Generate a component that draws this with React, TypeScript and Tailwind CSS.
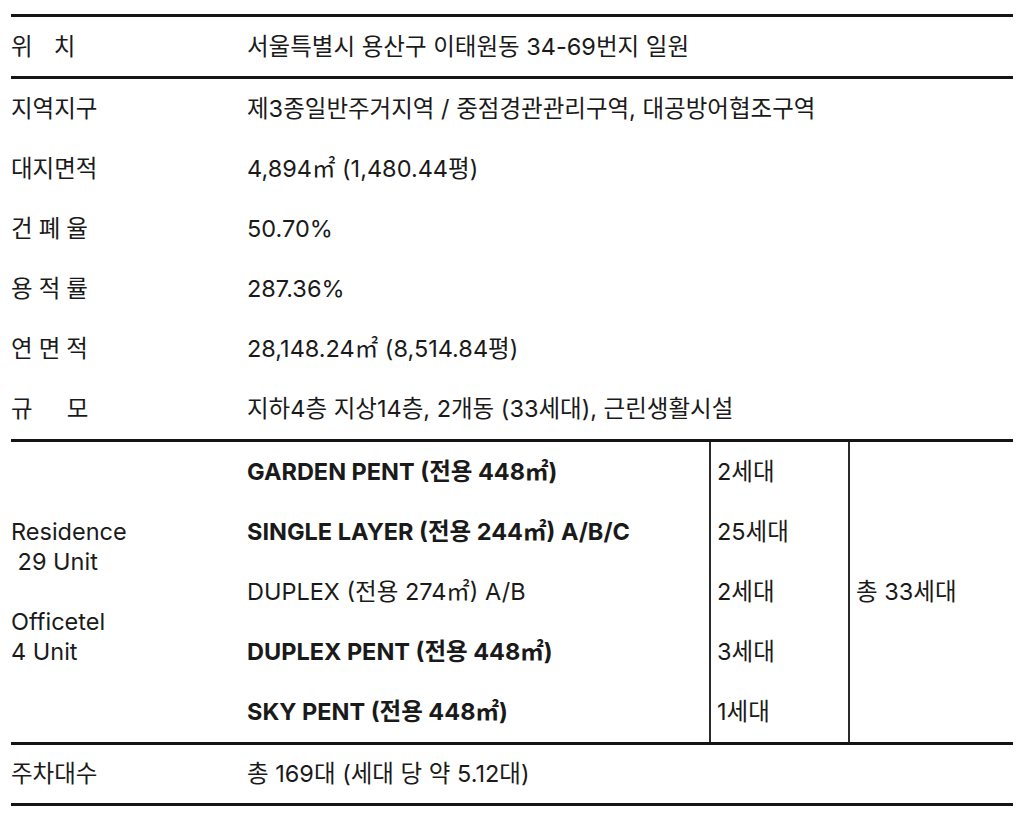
const rows: { label: string[]; gap: string; value: string }[] = [
  { label: ["지역지구"], gap: "gap-0", value: "제3종일반주거지역 / 중점경관관리구역, 대공방어협조구역" },
  { label: ["대지면적"], gap: "gap-0", value: "4,894㎡ (1,480.44평)" },
  { label: ["건", "폐", "율"], gap: "gap-[6px]", value: "50.70%" },
  { label: ["용", "적", "률"], gap: "gap-[6px]", value: "287.36%" },
  { label: ["연", "면", "적"], gap: "gap-[6px]", value: "28,148.24㎡ (8,514.84평)" },
  { label: ["규", "모"], gap: "gap-[34px]", value: "지하4층 지상14층, 2개동 (33세대), 근린생활시설" },
];

const units: { name: string; bold: boolean; count: string }[] = [
  { name: "GARDEN PENT (전용 448㎡)", bold: true, count: "2세대" },
  { name: "SINGLE LAYER (전용 244㎡) A/B/C", bold: true, count: "25세대" },
  { name: "DUPLEX (전용 274㎡) A/B", bold: false, count: "2세대" },
  { name: "DUPLEX PENT (전용 448㎡)", bold: true, count: "3세대" },
  { name: "SKY PENT (전용 448㎡)", bold: true, count: "1세대" },
];

function Label({ parts, gap }: { parts: string[]; gap: string }) {
  return (
    <div className={`flex w-[236px] shrink-0 ${gap}`}>
      {parts.map((p, i) => (
        <span key={i}>{p}</span>
      ))}
    </div>
  );
}

export default function App() {
  return (
    <div className="min-h-[823px] w-[1024px] bg-white px-[11px] pt-[14px] font-['Inter','Noto_Sans_CJK_KR',sans-serif] text-[23.5px] text-[#1a1a1a]">
      <div className="border-t-[3px] border-[#151515]">
        <div className="flex h-[59px] items-center">
          <Label parts={["위", "치"]} gap="gap-[21px]" />
          <span>서울특별시 용산구 이태원동 34-69번지 일원</span>
        </div>
      </div>

      <div className="border-t-[3px] border-[#151515]">
        {rows.map((r, i) => (
          <div key={i} className="flex h-[60px] items-center">
            <Label parts={r.label} gap={r.gap} />
            <span>{r.value}</span>
          </div>
        ))}
      </div>

      <div className="flex h-[303px] border-t-[3px] border-[#151515]">
        <div className="flex w-[236px] shrink-0 items-center whitespace-pre leading-[30px]">
          {"Residence\n 29 Unit\n\nOfficetel\n4 Unit"}
        </div>
        <div className="flex w-[462px] shrink-0 flex-col">
          {units.map((u, i) => (
            <div key={i} className={`flex h-[60px] items-center ${u.bold ? "font-bold" : ""}`}>
              {u.name}
            </div>
          ))}
        </div>
        <div className="flex w-[139px] shrink-0 flex-col border-l-2 border-[#2a2a2a] pl-[6px]">
          {units.map((u, i) => (
            <div key={i} className="flex h-[60px] items-center">
              {u.count}
            </div>
          ))}
        </div>
        <div className="flex flex-1 items-center border-l-2 border-[#2a2a2a] pl-[6px]">
          총 33세대
        </div>
      </div>

      <div className="border-t-[3px] border-[#151515]">
        <div className="flex h-[58px] items-center">
          <Label parts={["주차대수"]} gap="gap-0" />
          <span>총 169대 (세대 당 약 5.12대)</span>
        </div>
      </div>
      <div className="border-t-[3px] border-[#151515]" />
    </div>
  );
}
